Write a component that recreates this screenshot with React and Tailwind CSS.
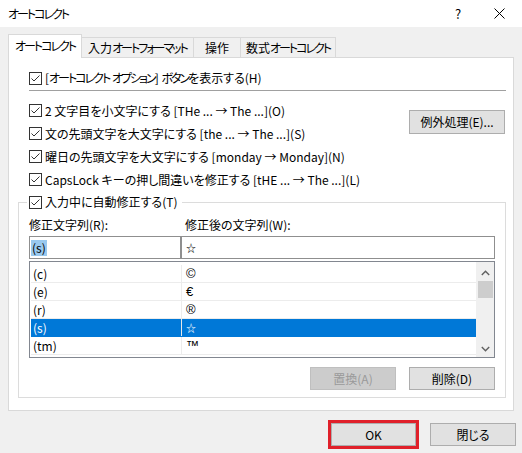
import React from "react";

const rows = [
  { from: "(c)", to: "©" },
  { from: "(e)", to: "€" },
  { from: "(r)", to: "®" },
  { from: "(s)", to: "☆", selected: true },
  { from: "(tm)", to: "™" },
];

// katakana runs are narrow in the original UI font
const K = ({ children }) => <span className="tracking-[-2px]">{children}</span>;

const Check = () => (
  <svg width="13" height="13" viewBox="0 0 13 13" className="shrink-0">
    <rect x="0.5" y="0.5" width="12" height="12" fill="#fff" stroke="#333" />
    <polyline points="2.5,6.5 5,9 10.5,3.5" fill="none" stroke="#333" strokeWidth="1" />
  </svg>
);

const CheckRow = ({ children, className = "" }) => (
  <div className={`flex items-center gap-[3px] ${className}`}>
    <Check />
    <span className="whitespace-nowrap">{children}</span>
  </div>
);

const Button = ({ children, disabled, className = "" }) => (
  <button
    className={`h-[23px] w-[86px] border flex items-center justify-center ${
      disabled
        ? "bg-[#cccccc] border-[#bfbfbf] text-[#9a9a9a]"
        : "bg-[#e1e1e1] border-[#adadad] text-black"
    } ${className}`}
  >
    {children}
  </button>
);

export default function App() {
  return (
    <div className="w-[522px] h-[453px] bg-[#f0f0f0] text-[12px] leading-[16px] text-black font-['Noto_Sans_CJK_JP',sans-serif] [font-feature-settings:'palt'] overflow-hidden">
      {/* Title bar */}
      <div className="h-[27px] bg-white flex items-center pl-[8px]">
        <span className="flex-1 whitespace-nowrap"><K>オートコレクト</K></span>
        <span className="w-[20px] text-center mr-[26px] text-[13px]">?</span>
        <svg width="11" height="11" viewBox="0 0 11 11" className="mr-[17px]">
          <path d="M0.5 0.5 L10.5 10.5 M10.5 0.5 L0.5 10.5" stroke="#000" strokeWidth="1" />
        </svg>
      </div>

      {/* Tabs */}
      <div className="ml-[8px] mt-[7px] flex items-end h-[24px] whitespace-nowrap">
        <div className="relative z-10 h-[24px] w-[74px] bg-white border-l border-t border-r border-[#d9d9d9] flex items-center justify-center pb-[2px]">
          <K>オートコレクト</K>
        </div>
        <div className="h-[21px] w-[112px] border-t border-r border-[#d9d9d9] flex items-center justify-center">
          入力<K>オートフォーマット</K>
        </div>
        <div className="h-[21px] w-[47px] border-t border-r border-[#d9d9d9] flex items-center justify-center">
          操作
        </div>
        <div className="h-[21px] w-[95px] border-t border-r border-[#d9d9d9] flex items-center justify-center">
          数式<K>オートコレクト</K>
        </div>
      </div>

      {/* Tab panel */}
      <div className="ml-[8px] -mt-[1px] w-[506px] h-[354px] bg-white border border-[#d9d9d9] pt-[9px] flex flex-col">
        <CheckRow className="h-[22px] ml-[20px]">
          [<K>オートコレクト</K> <K>オプション</K>] <K>ボタン</K>を表示する(H)
        </CheckRow>
        <div className="mt-[1px] ml-[20px] mr-[7px] h-px bg-[#a0a0a0]" />

        <div className="mt-[8px] flex">
          <div className="flex-1 flex flex-col ml-[20px]">
            <CheckRow className="h-[23px]">2 文字目を小文字にする [THe ... → The ...](O)</CheckRow>
            <CheckRow className="h-[23px]">文の先頭文字を大文字にする [the ... → The ...](S)</CheckRow>
            <CheckRow className="h-[23px]">曜日の先頭文字を大文字にする [monday → Monday](N)</CheckRow>
            <CheckRow className="h-[23px]">CapsLock キーの押し間違いを修正する [tHE ... → The ...](L)</CheckRow>
          </div>
          <button className="mt-[11px] mr-[8px] h-[24px] w-[96px] bg-[#e1e1e1] border border-[#adadad] flex items-center justify-center">
            例外処理(E)...
          </button>
        </div>

        {/* Group box */}
        <fieldset className="mt-[2px] ml-[9px] w-[488px] border border-[#dcdcdc] px-[10px] pb-[7px]">
          <legend className="-ml-[2px] pl-[2px] pr-[5px] h-[18px] flex items-center gap-[3px] bg-white">
            <Check />
            <span className="whitespace-nowrap">入力中に自動修正する(T)</span>
          </legend>

          <div className="mt-[6px] flex h-[16px]">
            <span className="w-[156px]">修正文字列(R):</span>
            <span>修正後の文字列(W):</span>
          </div>

          <div className="mt-[3px] flex">
            <div className="w-[152px] h-[23px] border border-[#8f8f8f] flex items-center pl-[1px]">
              <span className="bg-[#99c9ef] px-px">(s)</span>
            </div>
            <div className="w-[314px] h-[23px] border border-[#8f8f8f] flex items-center pl-[4px] text-[10px]">☆</div>
          </div>

          {/* List */}
          <div className="mt-[2px] w-[466px] h-[97px] border border-[#828790] flex">
            <div className="flex-1 pt-[3px] pl-[1px] overflow-hidden">
              {rows.map((r) => (
                <div
                  key={r.from}
                  className={`flex h-[18px] border-b ${
                    r.selected ? "bg-[#0078d7] text-white border-[#0078d7]" : "border-[#ececec]"
                  }`}
                >
                  <div className={`w-[151px] pl-[2px] flex items-center border-r ${r.selected ? "border-[#e8e8e8]" : "border-[#ececec]"}`}>
                    {r.from}
                  </div>
                  <div
                    className={`flex-1 pl-[4px] flex items-center ${
                      r.to === "☆" ? "text-[10px]" : "font-['Liberation_Sans',sans-serif] text-[13px]"
                    }`}
                  >
                    {r.to}
                  </div>
                </div>
              ))}
            </div>
            <div className="w-[18px] bg-[#f0f0f0] flex flex-col items-center">
              <div className="h-[17px] w-full flex items-center justify-center mt-[2px]">
                <svg width="9" height="6" viewBox="0 0 9 6">
                  <path d="M0.8 5 L4.5 1.3 L8.2 5" fill="none" stroke="#606060" strokeWidth="1.4" />
                </svg>
              </div>
              <div className="w-[15px] h-[17px] bg-[#cdcdcd]" />
              <div className="flex-1" />
              <div className="h-[17px] w-full flex items-center justify-center">
                <svg width="9" height="6" viewBox="0 0 9 6">
                  <path d="M0.8 1 L4.5 4.7 L8.2 1" fill="none" stroke="#606060" strokeWidth="1.4" />
                </svg>
              </div>
            </div>
          </div>

          <div className="mt-[9px] flex justify-end gap-[13px]">
            <Button disabled>置換(A)</Button>
            <Button>削除(D)</Button>
          </div>
        </fieldset>
      </div>

      {/* Footer buttons */}
      <div className="mt-[9px] flex items-center justify-end pr-[6px] gap-[11px]">
        <div className="border-[3px] border-[#e0202a]">
          <button className="h-[23px] w-[85px] bg-[#e1e1e1] border border-[#adadad] flex items-center justify-center">
            OK
          </button>
        </div>
        <Button>閉じる</Button>
      </div>
    </div>
  );
}
